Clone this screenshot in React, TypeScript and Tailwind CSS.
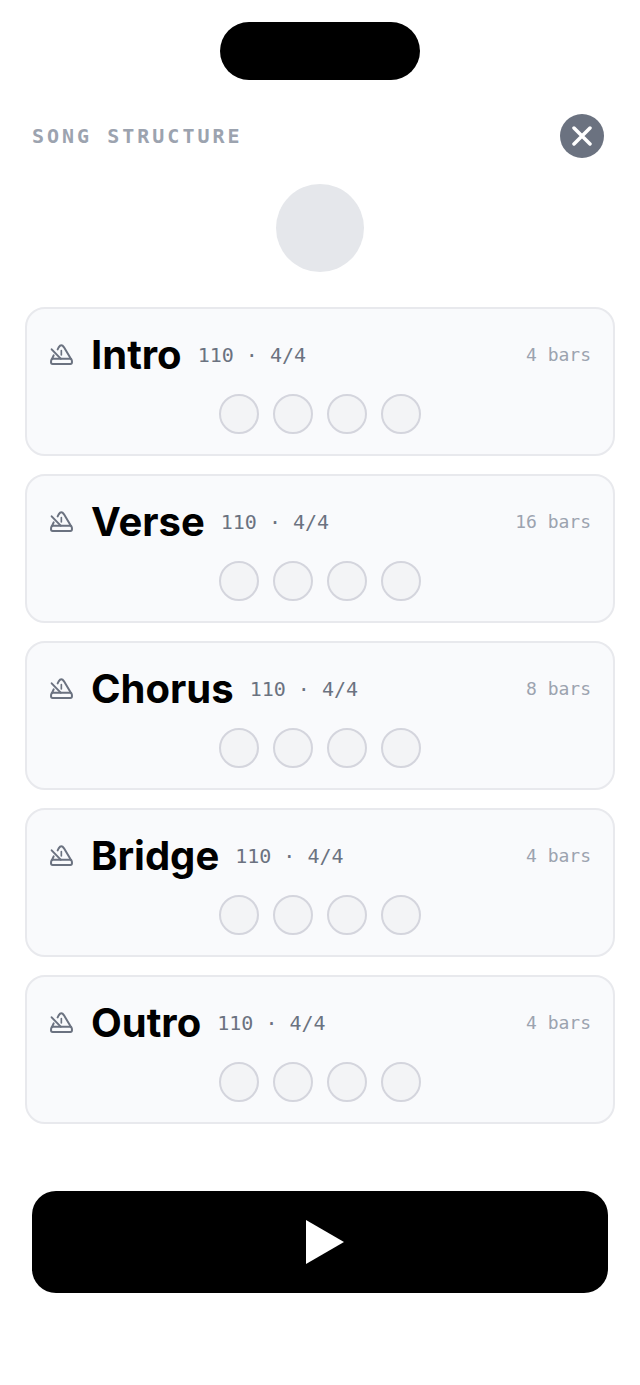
type Section = {
  name: string;
  bpm: number;
  meter: string;
  beats: number;
  bars: number;
};

const sections: Section[] = [
  { name: "Intro", bpm: 110, meter: "4/4", beats: 4, bars: 4 },
  { name: "Verse", bpm: 110, meter: "4/4", beats: 4, bars: 16 },
  { name: "Chorus", bpm: 110, meter: "4/4", beats: 4, bars: 8 },
  { name: "Bridge", bpm: 110, meter: "4/4", beats: 4, bars: 4 },
  { name: "Outro", bpm: 110, meter: "4/4", beats: 4, bars: 4 },
];

function MetronomeIcon() {
  return (
    <svg
      viewBox="0 0 72 66"
      className="w-6 h-[22px]"
      fill="none"
      stroke="currentColor"
      strokeWidth="6"
      strokeLinecap="round"
      strokeLinejoin="round"
      aria-hidden="true"
    >
      <path d="M8 16L35 44" />
      <path d="M26 16L29 10Q37 -2 45 10L66 45" />
      <path d="M14 34L9 45" />
      <path d="M37 20V33" strokeWidth="5" />
      <path d="M12 44H63C68 44 69 50 69 54C69 58 67 60 64 60H11C8 60 6 58 6 54C6 50 8 44 12 44Z" />
    </svg>
  );
}

function SectionCard({ section }: { section: Section }) {
  return (
    <li className="bg-[#f9fafc] border-2 border-[#e8e9ed] rounded-[20px] px-[22px] py-5">
      <div className="flex items-center h-[52px]">
        <button type="button" aria-label={`Metronome for ${section.name}`} className="text-[#6b7280]">
          <MetronomeIcon />
        </button>
        <h2 className="ml-[18px] text-[40px] leading-[52px] font-bold text-black">{section.name}</h2>
        <span className="ml-4 font-['DejaVu_Sans_Mono',monospace] text-xl text-[#6b7280]">
          {section.bpm} · {section.meter}
        </span>
        <span className="ml-auto font-['DejaVu_Sans_Mono',monospace] text-lg text-[#9ca3af]">
          {section.bars} bars
        </span>
      </div>

      {/* One dot per beat */}
      <div className="flex justify-center gap-[14px] mt-[13px]">
        {Array.from({ length: section.beats }, (_, i) => (
          <span key={i} className="size-10 rounded-full bg-[#f3f4f6] border-2 border-[#d4d5dd]"></span>
        ))}
      </div>
    </li>
  );
}

export default function App() {
  return (
    <div className="min-h-screen bg-white font-[Inter,sans-serif] pt-[22px] pb-[92px]">

      {/* Camera cutout */}
      <div className="w-[200px] h-[58px] mx-auto rounded-full bg-black"></div>

      <header className="flex items-center justify-between mt-[34px] pl-8 pr-9">
        <h1 className="font-['DejaVu_Sans_Mono',monospace] text-xl font-bold tracking-[3px] text-[#9ca3af]">
          SONG STRUCTURE
        </h1>
        <button
          type="button"
          aria-label="Close"
          className="size-11 rounded-full bg-[#6b7280] text-white flex items-center justify-center"
        >
          <svg viewBox="0 0 20 20" className="size-5" fill="none" stroke="currentColor" strokeWidth="3.5" strokeLinecap="round" aria-hidden="true">
            <path d="M2 2L18 18M18 2L2 18" />
          </svg>
        </button>
      </header>

      {/* Beat indicator */}
      <div className="size-[88px] mx-auto mt-[26px] rounded-full bg-[#e5e7eb]"></div>

      <main className="mt-[35px]">
        <ul className="flex flex-col gap-[18px] px-[25px]">
          {sections.map((section) => (
            <SectionCard key={section.name} section={section} />
          ))}
        </ul>

        <div className="px-8 mt-[67px]">
          <button
            type="button"
            aria-label="Play"
            className="w-full h-[102px] rounded-3xl bg-black text-white flex items-center justify-center"
          >
            <svg viewBox="0 0 38 44" className="w-[38px] h-11 ml-[9px]" fill="currentColor" aria-hidden="true">
              <path d="M0 0L38 22L0 44Z" />
            </svg>
          </button>
        </div>
      </main>
    </div>
  );
}
